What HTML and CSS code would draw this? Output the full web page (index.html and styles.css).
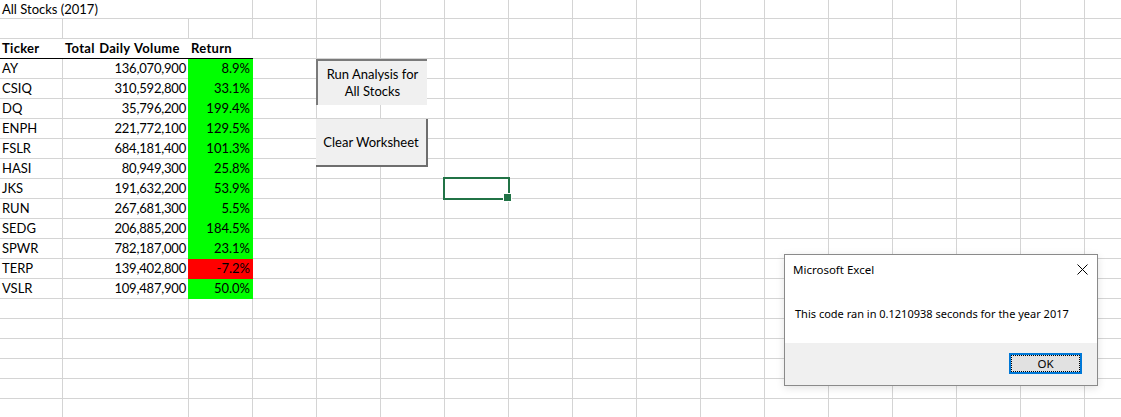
FILE: index.html
```html
<!DOCTYPE html>
<html lang="en">
  <head>
    <meta charset="UTF-8" />
    <link rel="stylesheet" href="styles.css">
    <title>All Stocks (2017)</title>
  </head>
  <body>

  <!-- the worksheet: gridlines come from the background, the data block sits on the same tracks -->
  <div class="sheet">
    <div class="block">
      <div class="cell title">All Stocks (2017)</div>
      <div class="cell"></div>

      <div class="cell"></div>
      <div class="cell"></div>
      <div class="cell"></div>

      <div class="cell head">Ticker</div>
      <div class="cell head">Total Daily Volume</div>
      <div class="cell head">Return</div>

      <div class="cell">AY</div>
      <div class="cell num">136,070,900</div>
      <div class="cell ret">8.9%</div>

      <div class="cell">CSIQ</div>
      <div class="cell num">310,592,800</div>
      <div class="cell ret">33.1%</div>

      <div class="cell">DQ</div>
      <div class="cell num">35,796,200</div>
      <div class="cell ret">199.4%</div>

      <div class="cell">ENPH</div>
      <div class="cell num">221,772,100</div>
      <div class="cell ret">129.5%</div>

      <div class="cell">FSLR</div>
      <div class="cell num">684,181,400</div>
      <div class="cell ret">101.3%</div>

      <div class="cell">HASI</div>
      <div class="cell num">80,949,300</div>
      <div class="cell ret">25.8%</div>

      <div class="cell">JKS</div>
      <div class="cell num">191,632,200</div>
      <div class="cell ret">53.9%</div>

      <div class="cell">RUN</div>
      <div class="cell num">267,681,300</div>
      <div class="cell ret">5.5%</div>

      <div class="cell">SEDG</div>
      <div class="cell num">206,885,200</div>
      <div class="cell ret">184.5%</div>

      <div class="cell">SPWR</div>
      <div class="cell num">782,187,000</div>
      <div class="cell ret">23.1%</div>

      <div class="cell">TERP</div>
      <div class="cell num">139,402,800</div>
      <div class="cell ret neg">-7.2%</div>

      <div class="cell">VSLR</div>
      <div class="cell num">109,487,900</div>
      <div class="cell ret">50.0%</div>
    </div>

    <!-- form controls floating on the sheet -->
    <button class="btn run" type="button">Run Analysis for<br>All Stocks</button>
    <button class="btn clear" type="button">Clear Worksheet</button>

    <div class="selection"></div>

    <div class="dialog">
      <div class="dialog-bar">
        <span>Microsoft Excel</span>
        <svg class="close" width="11" height="11" viewBox="0 0 11 11">
          <path d="M0.5 0.5 L10.5 10.5 M10.5 0.5 L0.5 10.5" stroke="#000" stroke-width="1" fill="none"/>
        </svg>
      </div>
      <div class="dialog-body">This code ran in 0.1210938 seconds for the year 2017</div>
      <div class="dialog-foot">
        <button class="ok" type="button">OK</button>
      </div>
    </div>
  </div>

</body>
</html>
```

FILE: styles.css
```css
*{
  box-sizing: border-box;
}
html, body {
  margin: 0;
  padding: 0;
}
body {
  background: #fff;
  font-family: Lato, "Liberation Sans", sans-serif;
  color: #000;
}

/*===============================*/
/* Worksheet                     */
/*===============================*/
.sheet {
  position: relative;
  width: 1121px;
  height: 417px;
  overflow: hidden;
  background:
    linear-gradient(#d4d4d4, #d4d4d4) 62px 0 / 1px 100% no-repeat,
    linear-gradient(#d4d4d4, #d4d4d4) 188px 0 / 1px 100% no-repeat,
    repeating-linear-gradient(to right, transparent 0 63px, #d4d4d4 63px 64px) 189px 0 / 100% 100% no-repeat,
    repeating-linear-gradient(to bottom, transparent 0 19px, #d4d4d4 19px 20px) 0 -1px / 100% 100% repeat-y;
}

.block {
  display: grid;
  grid-template-columns: 63px 126px 64px;
  grid-template-rows: 19px repeat(14, 20px);
  width: 253px;
  font-size: 13px;
  line-height: 19px;
}
.cell {
  padding: 0 2px;
  white-space: nowrap;
}
.title {
  grid-column: span 2;
  height: 18px;
  line-height: 18px;
  background: #fff;
}
.head {
  font-weight: bold;
  letter-spacing: 0.3px;
  word-spacing: 1px;
  background: #fff;
  border-bottom: 1px solid #000;
}
.num {
  text-align: right;
  padding-right: 3px;
  letter-spacing: -0.2px;
}
.ret {
  text-align: right;
  padding-right: 3px;
  margin-left: -1px;        /* fill hides the gridline on the left too */
  background: #00ff00;
}
.ret.neg {
  background: #ff0000;
}

/*===============================*/
/* Buttons                       */
/*===============================*/
.btn {
  position: absolute;
  left: 316px;
  margin: 0;
  padding: 0;
  display: flex;
  align-items: center;
  justify-content: center;
  background: #f0f0f0;
  border: 0;
  font-family: Lato, "Liberation Sans", sans-serif;
  font-size: 13px;
  line-height: 17px;
  color: #000;
  text-align: center;
}
.btn.run {
  top: 59px;
  width: 111px;
  height: 46px;
  border-top: 2px solid #7a7a7a;
  border-left: 2px solid #7a7a7a;
}
.btn.clear {
  top: 119px;
  width: 112px;
  height: 48px;
  border-right: 2px solid #6e6e6e;
  border-bottom: 2px solid #6e6e6e;
}

/* active cell */
.selection {
  position: absolute;
  left: 443px;
  top: 177px;
  width: 67px;
  height: 23px;
  border: 2px solid #217346;
}
.selection:after {
  content: "";
  position: absolute;
  right: -4px;
  bottom: -4px;
  width: 7px;
  height: 7px;
  background: #217346;
  border: 1px solid #fff;
}

/*===============================*/
/* Message box                   */
/*===============================*/
.dialog {
  position: absolute;
  left: 784px;
  top: 254px;
  width: 314px;
  height: 132px;
  display: flex;
  flex-direction: column;
  background: #fff;
  border: 1px solid #8a8a8a;
  box-shadow: 0 2px 8px rgba(0, 0, 0, 0.12);
  font-family: "Noto Sans", "Liberation Sans", sans-serif;
  font-size: 11px;
  color: #000;
}
.dialog-bar {
  height: 29px;
  display: flex;
  align-items: center;
  justify-content: space-between;
  padding: 0 9px 0 8px;
  font-size: 11.5px;
}
.close {
  display: block;
}
.dialog-body {
  flex: 1;
  display: flex;
  align-items: center;
  padding-left: 10px;
  white-space: nowrap;
}
.dialog-foot {
  height: 42px;
  display: flex;
  justify-content: flex-end;
  align-items: flex-start;
  padding: 10px 15px 0 0;
  background: #f0f0f0;
}
.ok {
  width: 73px;
  height: 21px;
  margin: 0;
  padding: 0;
  background: #e1e1e1;
  border: 2px solid #0078d7;
  outline: 1px dotted #000;
  outline-offset: -3px;
  font-family: "Noto Sans", "Liberation Sans", sans-serif;
  font-size: 11.5px;
  line-height: 15px;
  color: #000;
}
```
